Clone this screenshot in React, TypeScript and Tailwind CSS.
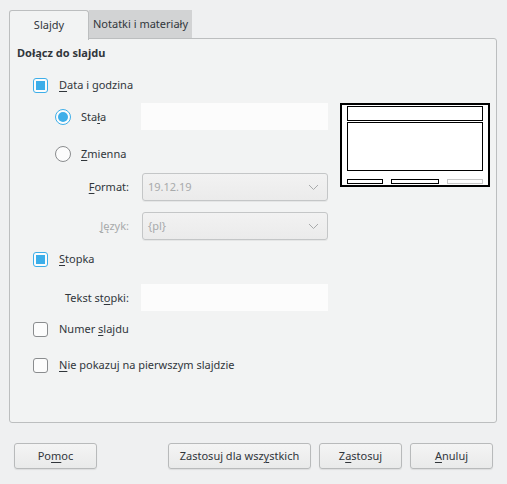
import React from "react";

const F = { fontFamily: '"Noto Sans", "DejaVu Sans", sans-serif' };

function U({ children }: { children: React.ReactNode }) {
  return <span className="underline underline-offset-2 decoration-1">{children}</span>;
}

function Check({ checked }: { checked?: boolean }) {
  return checked ? (
    <div className="w-[15px] h-[15px] rounded-[3px] border border-[#3daee9] bg-[#fcfcfc] flex items-center justify-center shrink-0">
      <div className="w-[9px] h-[9px] bg-[#3daee9]" />
    </div>
  ) : (
    <div className="w-[15px] h-[15px] rounded-[3px] border border-[#8a8c8e] bg-[#fcfcfc] shrink-0" />
  );
}

function Radio({ checked }: { checked?: boolean }) {
  return checked ? (
    <div className="w-[16px] h-[16px] rounded-full border border-[#3daee9] bg-[#fcfcfc] flex items-center justify-center shrink-0">
      <div className="w-[10px] h-[10px] rounded-full bg-[#3daee9]" />
    </div>
  ) : (
    <div className="w-[16px] h-[16px] rounded-full border border-[#8a8c8e] bg-[#fcfcfc] shrink-0" />
  );
}

function Select({ value }: { value: string }) {
  return (
    <div className="w-[186px] h-[28px] rounded-[3px] border border-[#c4c6c7] bg-gradient-to-b from-[#f2f2f2] to-[#ebebeb] flex items-center justify-between pl-[5px] pr-[8px] text-[#a8aaab] shadow-[0_1px_0_rgba(0,0,0,0.05)]">
      <span>{value}</span>
      <svg width="11" height="7" viewBox="0 0 11 7">
        <path d="M1 1 L5.5 5.5 L10 1" fill="none" stroke="#a8aaab" strokeWidth="1" />
      </svg>
    </div>
  );
}

function Btn({ children, w }: { children: React.ReactNode; w: string }) {
  return (
    <div className={`${w} h-[26px] rounded-[3px] border border-[#b8babb] bg-gradient-to-b from-[#f4f4f4] to-[#e9eaea] flex items-center justify-center text-[#31363b] shadow-[0_1px_1px_rgba(0,0,0,0.08)]`}>
      {children}
    </div>
  );
}

export default function App() {
  return (
    <div style={F} className="w-[507px] h-[484px] bg-[#eff0f1] text-[11px] leading-[16px] text-[#31363b] relative overflow-hidden">
      <div className="pt-[10px] pl-[9px] pr-[10px]">
        <div className="flex h-[28px]">
          <div className="w-[80px] h-[30px] relative z-10 border border-b-0 border-[#bcbebf] rounded-t-[3px] bg-[#f2f3f3] flex items-center justify-center pb-[2px]">
            Slajdy
          </div>
          <div className="w-[103px] h-[28px] bg-[#d2d3d4] flex items-center justify-center">
            Notatki i materiały
          </div>
        </div>
        <div className="h-[385px] border border-[#bcbebf] rounded-b-[3px] rounded-tr-[3px] bg-[#f2f3f3] flex pl-[7px] pt-[5px]">
          <div className="w-[321px] shrink-0">
            <div className="font-bold h-[18px] flex items-center">Dołącz do slajdu</div>
            <div className="flex items-center h-[16px] mt-[15px] pl-[16px] gap-[11px]">
              <Check checked />
              <span><U>D</U>ata i godzina</span>
            </div>
            <div className="flex items-center h-[27px] mt-[10px]">
              <div className="w-[124px] flex items-center pl-[38px] gap-[10px]">
                <Radio checked />
                <span>Sta<U>ł</U>a</span>
              </div>
              <div className="w-[187px] h-[27px] bg-[#fcfcfc]" />
            </div>
            <div className="flex items-center h-[16px] mt-[16px] pl-[38px] gap-[10px]">
              <Radio />
              <span><U>Z</U>mienna</span>
            </div>
            <div className="flex items-center h-[28px] mt-[11px]">
              <div className="w-[112px] text-right">
                <U>F</U>ormat:
              </div>
              <div className="ml-[13px]">
                <Select value="19.12.19" />
              </div>
            </div>
            <div className="flex items-center h-[28px] mt-[11px]">
              <div className="w-[112px] text-right text-[#a8aaab]">
                <U>J</U>ęzyk:
              </div>
              <div className="ml-[13px]">
                <Select value="{pl}" />
              </div>
            </div>
            <div className="flex items-center h-[16px] mt-[11px] pl-[16px] gap-[11px]">
              <Check checked />
              <span><U>S</U>topka</span>
            </div>
            <div className="flex items-center h-[27px] mt-[17px]">
              <div className="w-[124px] pl-[48px]">
                Tekst st<U>o</U>pki:
              </div>
              <div className="w-[187px] h-[27px] bg-[#fcfcfc]" />
            </div>
            <div className="flex items-center h-[16px] mt-[10px] pl-[16px] gap-[11px]">
              <Check />
              <span>Numer <U>s</U>lajdu</span>
            </div>
            <div className="flex items-center h-[16px] mt-[20px] pl-[16px] gap-[11px]">
              <Check />
              <span><U>N</U>ie pokazuj na pierwszym slajdzie</span>
            </div>
          </div>
          <div className="pt-[59px] pl-[2px]">
            <div className="w-[150px] h-[84px] border-2 border-black bg-white relative">
              <div className="absolute left-[5px] top-[1px] w-[136px] h-[15px] border-[1.5px] border-black" />
              <div className="absolute left-[5px] top-[17px] w-[136px] h-[49px] border-[1.5px] border-black" />
              <div className="absolute left-[5px] top-[74px] w-[36px] h-[5px] border-[1.5px] border-black" />
              <div className="absolute left-[49px] top-[74px] w-[48px] h-[5px] border-[1.5px] border-black" />
              <div className="absolute left-[105px] top-[74px] w-[36px] h-[5px] border-[1.5px] border-[#c8c8c8]" />
            </div>
          </div>
        </div>
        <div className="flex items-center mt-[20px] pl-[5px] pr-[4px]">
          <Btn w="w-[83px]">Po<U>m</U>oc</Btn>
          <div className="flex-1" />
          <Btn w="w-[143px]">Zastosuj dla wsz<U>y</U>stkich</Btn>
          <div className="w-[8px]" />
          <Btn w="w-[83px]">Z<U>a</U>stosuj</Btn>
          <div className="w-[8px]" />
          <Btn w="w-[83px]"><U>A</U>nuluj</Btn>
        </div>
      </div>
    </div>
  );
}
